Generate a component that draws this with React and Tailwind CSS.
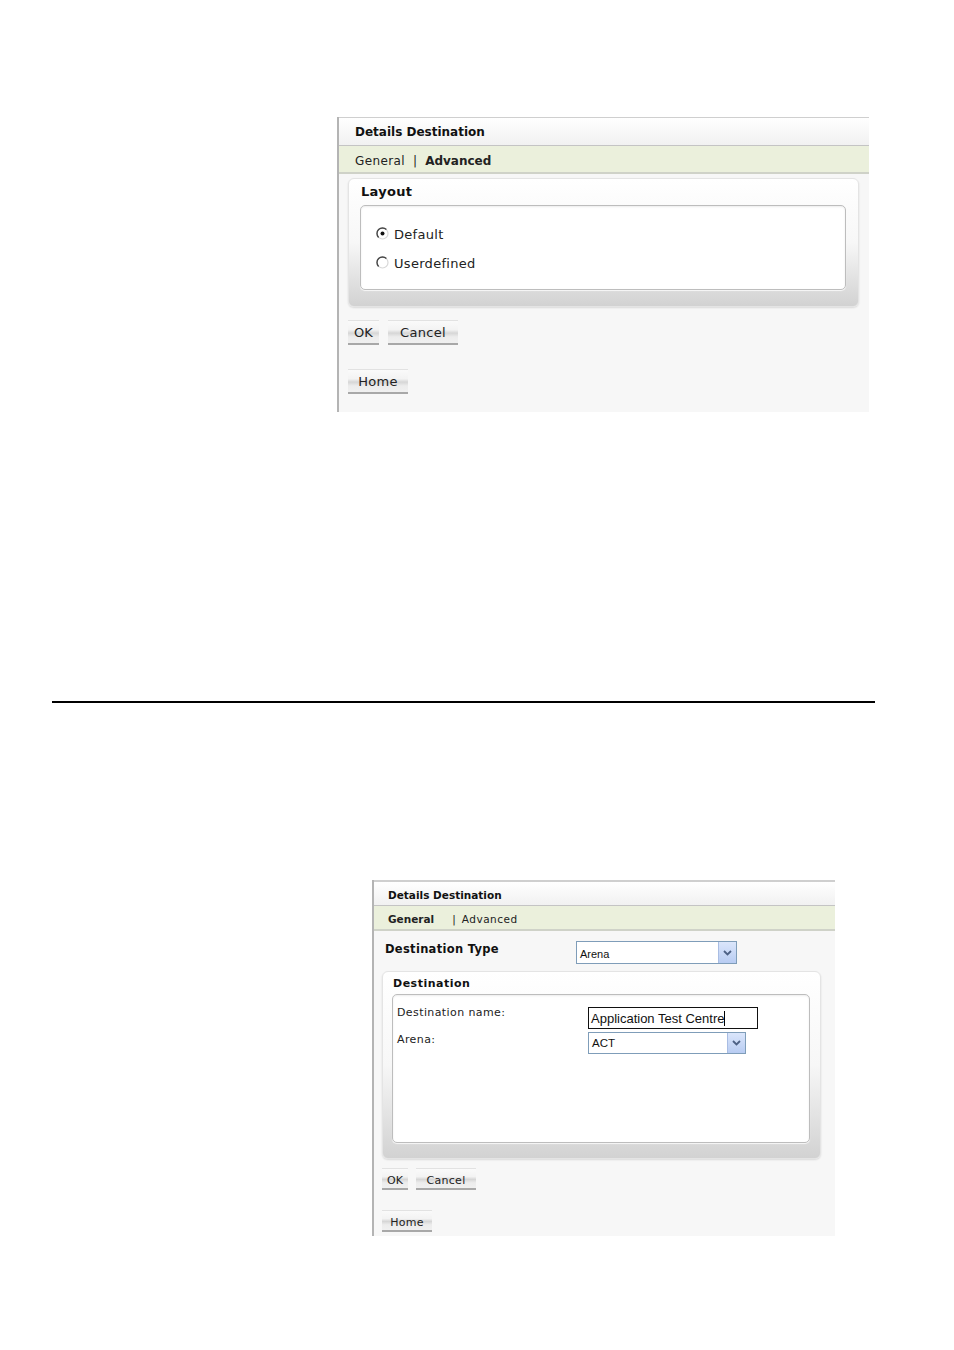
import React from 'react';

const btnBg =
  'bg-[linear-gradient(to_bottom,#fafafa_0%,#f3f3f3_40%,#d6d6d6_55%,#ececec_72%,#f0f0f0_100%)]';

const Radio = ({ checked }) => (
  <svg width="13" height="13" viewBox="0 0 13 13" className="shrink-0 -mt-[3px]">
    <circle cx="6.5" cy="6.5" r="5.5" fill="#fff" stroke="#d8d8d8" strokeWidth="1.2" />
    <path d="M2.6 10.4 A5.5 5.5 0 0 1 10.4 2.6" fill="none" stroke="#444" strokeWidth="1.4" />
    {checked && <circle cx="6.5" cy="6.5" r="2" fill="#111" />}
  </svg>
);

const Arrow = () => (
  <span className="w-[18px] h-full flex items-center justify-center border-l border-[#a9bde3] bg-gradient-to-b from-[#dbe6fb] to-[#b8ccf2]">
    <svg width="9" height="6" viewBox="0 0 9 6">
      <path d="M1 1 L4.5 4.5 L8 1" fill="none" stroke="#4d6185" strokeWidth="1.8" />
    </svg>
  </span>
);

const Btn = ({ children, className }) => (
  <button
    type="button"
    className={`${btnBg} border-t border-[#e2e2e2] border-b-2 border-b-[#a8a8a8] text-[#222] ${className}`}
  >
    {children}
  </button>
);

const GroupBox = ({ title, className, titleClass, innerClass, children }) => (
  <div
    className={`rounded-[6px] border border-[#e4e4e4] bg-gradient-to-b from-white via-[#f7f7f7] to-[#d2d2d2] shadow-[0_1px_2px_rgba(0,0,0,0.12)] ${className}`}
  >
    <div className={`font-bold text-[#111] ${titleClass}`}>{title}</div>
    <div
      className={`bg-white rounded-[5px] border border-[#bdbdbd] shadow-[inset_0_1px_2px_rgba(0,0,0,0.08),0_1px_1px_rgba(255,255,255,0.8)] ${innerClass}`}
    >
      {children}
    </div>
  </div>
);

export default function App() {
  return (
    <div className="w-[954px] h-[1350px] bg-white font-['DejaVu_Sans',Verdana,sans-serif] flex flex-col">
      {/* First screenshot: Advanced tab */}
      <div className="mt-[117px] ml-[337px] w-[532px] h-[295px] bg-[#f7f7f7] border-l-2 border-[#b4b4b4] flex flex-col">
        <div className="h-[29px] shrink-0 border-t border-[#cfcfcf] border-b border-b-[#c4c4c4] bg-gradient-to-b from-white to-[#f1f1f1] flex items-center pl-[16px] pt-[1px] text-[12px] font-bold text-[#111]">
          Details Destination
        </div>
        <div className="h-[28px] shrink-0 bg-[#ebf0dc] border-b-2 border-[#cfd2c8] flex items-center pl-[16px] pt-[3px] text-[12px] text-[#222]">
          <span className="tracking-[0.4px]">General</span>
          <span className="mx-[8px]">|</span>
          <span className="font-bold">Advanced</span>
        </div>
        <GroupBox
          title="Layout"
          className="mt-[4px] ml-[9px] w-[511px] h-[129px] px-[11px]"
          titleClass="h-[26px] flex items-center pl-[1px] text-[13px] tracking-[0.3px]"
          innerClass="h-[85px] mr-[1px] pt-[21px] pl-[15px] flex flex-col gap-[13px] text-[13px] text-[#222] tracking-[0.3px]"
        >
          <label className="flex items-center gap-[5px] h-[16px]">
            <Radio checked />
            <span>Default</span>
          </label>
          <label className="flex items-center gap-[5px] h-[16px]">
            <Radio />
            <span>Userdefined</span>
          </label>
        </GroupBox>
        <div className="mt-[13px] ml-[9px] flex gap-[9px] text-[13px]">
          <Btn className="w-[31px] h-[25px] pt-[1px]">OK</Btn>
          <Btn className="w-[70px] h-[25px] pt-[1px] tracking-[0.3px]">Cancel</Btn>
        </div>
        <div className="mt-[24px] ml-[9px] flex text-[13px]">
          <Btn className="w-[60px] h-[25px] pt-[1px] tracking-[0.3px]">Home</Btn>
        </div>
      </div>

      {/* Separator */}
      <div className="mt-[289px] ml-[52px] w-[823px] h-[2px] bg-black" />

      {/* Second screenshot: General tab */}
      <div className="mt-[177px] ml-[372px] w-[463px] h-[356px] bg-[#f7f7f7] border-l-2 border-[#b4b4b4] flex flex-col">
        <div className="h-[26px] shrink-0 border-t-2 border-[#cfcfcf] border-b border-b-[#c4c4c4] bg-gradient-to-b from-white to-[#f1f1f1] flex items-center pl-[14px] pt-[4px] text-[10.5px] font-bold text-[#111]">
          Details Destination
        </div>
        <div className="h-[25px] shrink-0 bg-[#ebf0dc] border-b-2 border-[#cfd2c8] flex items-center pl-[14px] pt-[4px] text-[10.5px] text-[#222]">
          <span className="font-bold">General</span>
          <span className="ml-[18px] mr-[6px]">|</span>
          <span className="tracking-[0.5px]">Advanced</span>
        </div>
        <div className="mt-[10px] h-[23px] flex items-center">
          <span className="ml-[11px] w-[191px] text-[11.5px] font-bold text-[#111] tracking-[0.3px] -mt-[5px]">
            Destination Type
          </span>
          <div className="w-[161px] h-[23px] border border-[#7f9db9] bg-white flex items-stretch">
            <span className="flex-1 flex items-center pl-[3px] pt-[3px] text-[11px] font-['Liberation_Sans',Arial,sans-serif] text-[#111]">
              Arena
            </span>
            <Arrow />
          </div>
        </div>
        <GroupBox
          title="Destination"
          className="mt-[7px] ml-[8px] w-[439px] h-[188px] px-[9px]"
          titleClass="h-[22px] flex items-center pl-[1px] pt-[2px] text-[11px] tracking-[0.5px]"
          innerClass="h-[149px] mr-[1px] pt-[11px] pl-[4px] text-[11px] text-[#222] tracking-[0.4px]"
        >
          <div className="flex items-start">
            <span className="w-[191px] h-[14px] leading-[14px]">Destination name:</span>
            <div className="w-[170px] h-[22px] mt-[1px] border border-[#111] bg-white flex items-center pl-[2px] pt-[1px] text-[13px] tracking-normal font-['Liberation_Sans',Arial,sans-serif] text-[#111]">
              Application Test Centre
              <span className="w-px h-[15px] bg-black" />
            </div>
          </div>
          <div className="flex items-start mt-[3px]">
            <span className="w-[191px] h-[14px] leading-[14px] mt-[1px]">Arena:</span>
            <div className="w-[158px] h-[22px] border border-[#7f9db9] bg-white flex items-stretch">
              <span className="flex-1 flex items-center pl-[3px] pt-[2px] text-[11.5px] tracking-normal font-['Liberation_Sans',Arial,sans-serif] text-[#111]">
                ACT
              </span>
              <Arrow />
            </div>
          </div>
        </GroupBox>
        <div className="mt-[9px] ml-[8px] flex gap-[8px] text-[11px]">
          <Btn className="w-[26px] h-[22px] pt-[4px]">OK</Btn>
          <Btn className="w-[60px] h-[22px] pt-[4px] tracking-[0.3px]">Cancel</Btn>
        </div>
        <div className="mt-[20px] ml-[8px] flex text-[11px]">
          <Btn className="w-[50px] h-[22px] pt-[4px] tracking-[0.3px]">Home</Btn>
        </div>
      </div>
    </div>
  );
}
